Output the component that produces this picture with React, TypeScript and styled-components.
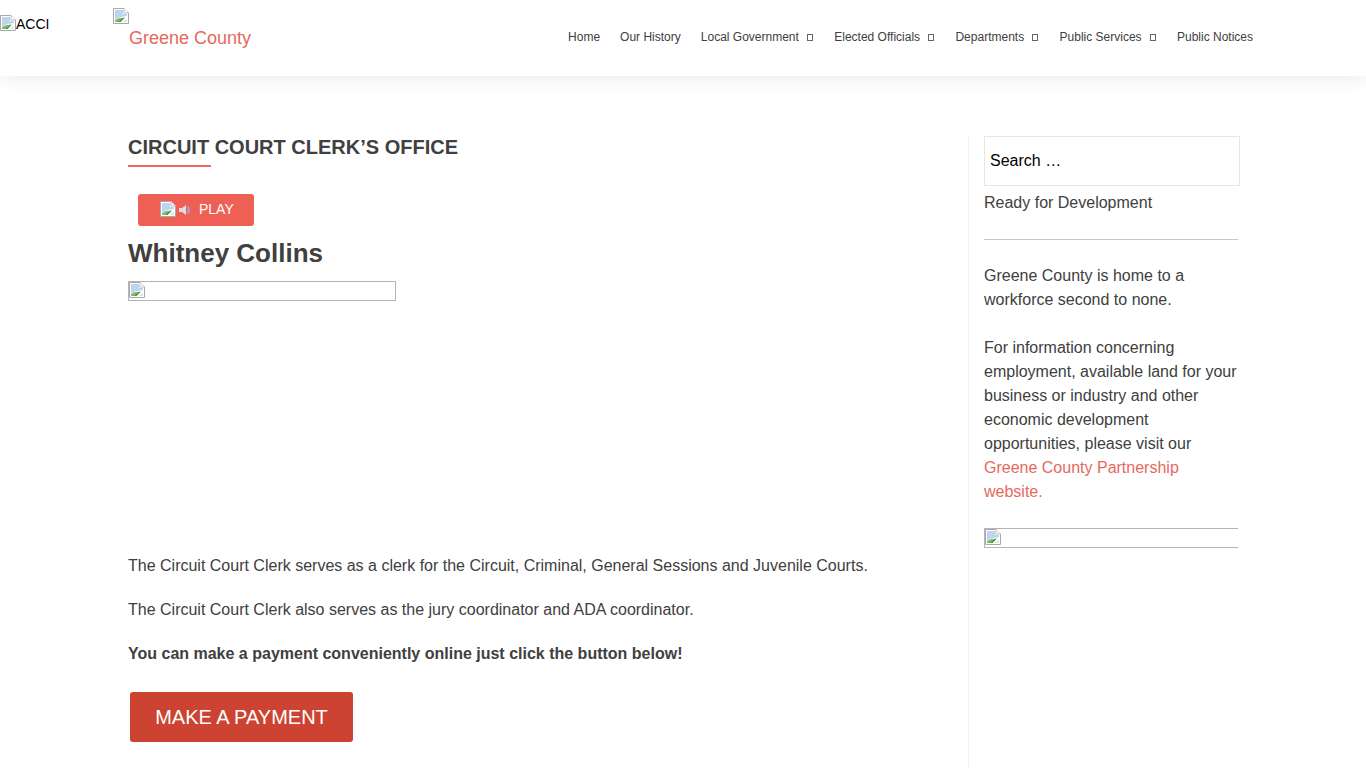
import styled, { createGlobalStyle } from "styled-components";

const navItems = [
  { label: "Home" },
  { label: "Our History" },
  { label: "Local Government", sub: true },
  { label: "Elected Officials", sub: true },
  { label: "Departments", sub: true },
  { label: "Public Services", sub: true },
  { label: "Public Notices" },
];

const BrokenImage = () => (
  <BrokenIcon viewBox="0 0 16 16" aria-hidden="true">
    <path d="M0.5 0.5H11L15.5 5V15.5H0.5Z" fill="#fff" stroke="#a8a8a8" />
    <path d="M11 0.5V5H15.5" fill="#fff" stroke="#bcbcbc" />
    <path d="M2 2H10V6H14V8L8 9C5 9.5 3 10.5 2 12Z" fill="#bcd3f2" />
    <path d="M2 14V12.5C4 10.5 7 9.5 9.5 10L4.5 14Z" fill="#7dbd6a" />
    <path d="M4.5 14L9.5 10L12 9.5L7.5 14Z" fill="#379a2d" />
    <path d="M9.5 14L14 11V14Z" fill="#e2e2e2" />
  </BrokenIcon>
);

export default function App() {
  return (
    <>
      <GlobalStyle />
      <Header>
        <AlertLogo>
          <BrokenImage />
          <span>ACCI</span>
        </AlertLogo>
        <SiteLogo>
          <BrokenImage />
          <SiteName>Greene County</SiteName>
        </SiteLogo>
        <Nav>
          {navItems.map((item) => (
            <NavItem key={item.label} href="#">
              {item.label}
              {item.sub && <Caret />}
            </NavItem>
          ))}
        </Nav>
      </Header>

      <Main>
        <Content>
          <PageTitle>CIRCUIT COURT CLERK’S OFFICE</PageTitle>
          <PlayButton>
            <BrokenImage />
            <SpeakerIcon viewBox="0 0 14 14" aria-hidden="true">
              <path d="M1 5H4L8 2V12L4 9H1Z" fill="#e3dbe8" />
              <path d="M9.5 3.5C11.5 6 11.5 8 9.5 10.5" fill="none" stroke="#9aa8dc" strokeWidth="2" />
            </SpeakerIcon>
            <PlayLabel>PLAY</PlayLabel>
          </PlayButton>
          <PersonName>Whitney Collins</PersonName>
          <PortraitSlot>
            <ImageFrame $width="268px">
              <BrokenImage />
            </ImageFrame>
          </PortraitSlot>
          <Paragraph>The Circuit Court Clerk serves as a clerk for the Circuit, Criminal, General Sessions and Juvenile Courts.</Paragraph>
          <Paragraph>The Circuit Court Clerk also serves as the jury coordinator and ADA coordinator.</Paragraph>
          <Paragraph><strong>You can make a payment conveniently online just click the button below!</strong></Paragraph>
          <PayButton href="#">MAKE A PAYMENT</PayButton>
        </Content>

        <Sidebar>
          <SearchBox placeholder="Search …" />
          <SideText>Ready for Development</SideText>
          <Divider />
          <SideText>Greene County is home to a<br />workforce second to none.</SideText>
          <SideBlock>
            For information concerning employment, available land for your business or industry and other
            economic development opportunities, please visit our <SideLink href="#">Greene County Partnership website.</SideLink>
          </SideBlock>
          <SideFrameRow>
            <ImageFrame $width="254px" $open>
              <BrokenImage />
            </ImageFrame>
          </SideFrameRow>
        </Sidebar>
      </Main>
    </>
  );
}

const GlobalStyle = createGlobalStyle`
  html, body {
    margin: 0;
    height: 100%;
    overflow: hidden;
    background: #fff;
  }

  body {
    font-family: "Liberation Sans", Arial, sans-serif;
    font-size: 16px;
    line-height: 24px;
    color: #404040;
  }

  ::placeholder {
    color: #000;
    opacity: 1;
  }
`

const BrokenIcon = styled.svg`
  display: block;
  flex: none;
  width: 16px;
  height: 16px;
`

const Header = styled.header`
  position: relative;
  display: flex;
  height: 76px;
  background: #fff;
  box-shadow: 0 0 20px rgba(0, 0, 0, 0.1);
`

const AlertLogo = styled.div`
  display: flex;
  align-items: flex-start;
  width: 113px;
  padding-top: 15px;
  font-size: 14px;
  line-height: 16px;
  color: #000;

  span {
    margin-top: 1px;
  }
`

const SiteLogo = styled.a`
  display: block;
  padding-top: 8px;
`

const SiteName = styled.div`
  margin: 2px 0 0 16px;
  font-size: 18px;
  line-height: 24px;
  color: #e5695d;
`

const Nav = styled.nav`
  display: flex;
  align-items: center;
  gap: 20px;
  margin-left: auto;
  padding: 0 113px 2px 0;
`

const NavItem = styled.a`
  display: flex;
  align-items: center;
  font-size: 12px;
  line-height: 16px;
  color: #404040;
  text-decoration: none;
`

const Caret = styled.span`
  width: 6px;
  height: 7px;
  margin: 0 1.4px 0 8px;
  border: 1px solid #666;
  box-sizing: border-box;
`

const Main = styled.main`
  display: flex;
  align-items: stretch;
  height: 692px;
  padding: 60px 0 0 128px;
  box-sizing: border-box;
`

const Content = styled.div`
  width: 841px;
  box-sizing: border-box;
  border-right: 1px solid #f0f0f0;
`

const PageTitle = styled.h1`
  position: relative;
  margin: 0 0 27px;
  padding-bottom: 8px;
  font-size: 20px;
  line-height: 23px;
  font-weight: 700;

  &::after {
    content: "";
    position: absolute;
    left: 0;
    bottom: 0;
    width: 83px;
    height: 2px;
    background: #e5695d;
  }
`

const PlayButton = styled.div`
  display: flex;
  align-items: flex-start;
  width: 116px;
  height: 32px;
  margin-left: 10px;
  padding: 7px 0 0 22px;
  box-sizing: border-box;
  border-radius: 3px;
  background: #ee6055;
  color: #fff;
`

const SpeakerIcon = styled.svg`
  width: 14px;
  height: 14px;
  margin: 2px 0 0 2px;
`

const PlayLabel = styled.span`
  margin-left: 7px;
  font-size: 14px;
  line-height: 16px;
`

const PersonName = styled.h2`
  margin: 12px 0 13px;
  font-size: 26px;
  line-height: 30px;
  font-weight: 700;
`

const PortraitSlot = styled.div`
  height: 273px;
`

const ImageFrame = styled.div<{ $width: string; $open?: boolean }>`
  width: ${(p) => p.$width};
  height: 20px;
  box-sizing: border-box;
  border: 1px solid #b5b5b5;
  ${(p) => p.$open && "border-right: 0;"}
`

const Paragraph = styled.p`
  margin: 0 0 20px;
  strong {
    font-weight: 700;
  }
`

const PayButton = styled.a`
  display: block;
  width: 223px;
  height: 50px;
  margin: 26px 0 0 2px;
  border-radius: 3px;
  background: #cc4331;
  color: #fff;
  font-size: 20px;
  line-height: 50px;
  text-align: center;
  text-decoration: none;
`

const Sidebar = styled.aside`
  width: 256px;
  margin-left: 15px;
`

const SearchBox = styled.input`
  display: block;
  width: 256px;
  height: 50px;
  padding: 0 5px;
  box-sizing: border-box;
  border: 1px solid #e6e6e6;
  outline: 0;
  font: 16px "Liberation Sans", Arial, sans-serif;
  color: #000;
`

const SideText = styled.p`
  margin: 5px 0 0;
`

const Divider = styled.hr`
  width: 254px;
  height: 1px;
  margin: 24px 0 24px;
  border: 0;
  background: #c8c8c8;
`

const SideBlock = styled.p`
  width: 254px;
  margin: 24px 0 0;
`

const SideLink = styled.a`
  color: #e5695d;
  text-decoration: none;
`

const SideFrameRow = styled.div`
  margin-top: 24px;
`
